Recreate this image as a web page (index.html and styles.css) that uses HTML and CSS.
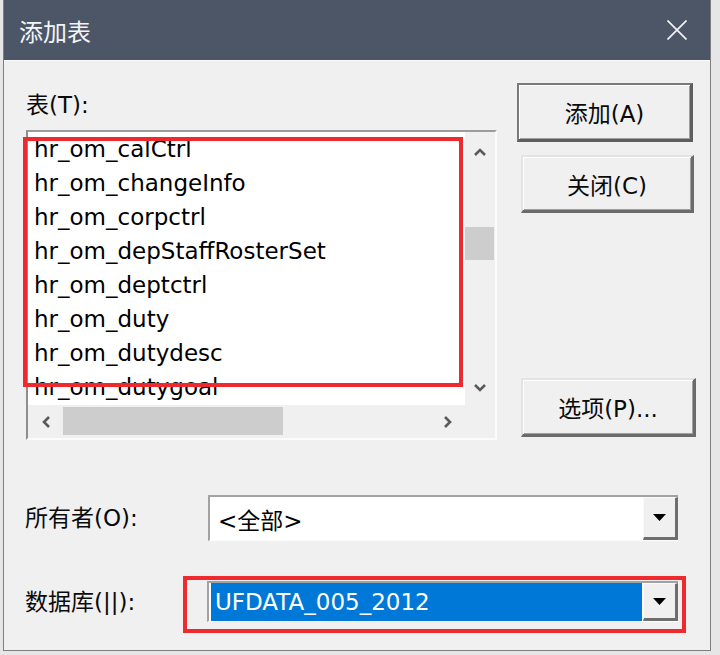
FILE: index.html
```html
<!DOCTYPE html>
<html lang="zh-CN">
<head>
<meta charset="utf-8">
<title>添加表</title>
<link rel="stylesheet" href="styles.css">
</head>
<body>
<div class="dialog">
  <div class="titlebar">
    <span class="title">添加表</span>
    <svg class="close" width="20" height="20" viewBox="0 0 20 20"><path d="M0.5 0.5 L19.5 19.5 M19.5 0.5 L0.5 19.5" stroke="#f2f3f5" stroke-width="1.7" fill="none"/></svg>
  </div>
  <div class="content">
    <div class="main">
      <div class="left">
        <div class="label lbl-table">表(T):</div>
        <div class="listbox">
          <ul class="items">
            <li>hr_om_calCtrl</li>
            <li>hr_om_changeInfo</li>
            <li>hr_om_corpctrl</li>
            <li>hr_om_depStaffRosterSet</li>
            <li>hr_om_deptctrl</li>
            <li>hr_om_duty</li>
            <li>hr_om_dutydesc</li>
            <li>hr_om_dutygoal</li>
          </ul>
          <div class="vscroll">
            <div class="arrow"><svg width="12" height="8" viewBox="0 0 12 8"><polyline points="1,7 6,2 11,7" fill="none" stroke="#5a5a5a" stroke-width="2.6"/></svg></div>
            <div class="vtrack"><div class="vthumb"></div></div>
            <div class="arrow"><svg width="12" height="8" viewBox="0 0 12 8"><polyline points="1,1 6,6 11,1" fill="none" stroke="#5a5a5a" stroke-width="2.6"/></svg></div>
          </div>
          <div class="hscroll">
            <div class="harrow"><svg width="8" height="12" viewBox="0 0 8 12"><polyline points="7,1 2,6 7,11" fill="none" stroke="#5a5a5a" stroke-width="2.6"/></svg></div>
            <div class="htrack"><div class="hthumb"></div></div>
            <div class="harrow"><svg width="8" height="12" viewBox="0 0 8 12"><polyline points="1,1 6,6 1,11" fill="none" stroke="#5a5a5a" stroke-width="2.6"/></svg></div>
          </div>
          <div class="corner"></div>
          <div class="annot annot-list"></div>
        </div>
      </div>
      <div class="buttons">
        <div class="btn btn-default">添加(A)</div>
        <div class="btn btn-close">关闭(C)</div>
        <div class="btn btn-opt">选项(P)...</div>
      </div>
    </div>
    <div class="field-row owner">
      <div class="label">所有者(O):</div>
      <div class="combo combo-owner">
        <div class="field">&lt;全部&gt;</div>
        <div class="dd"><svg width="13" height="7" viewBox="0 0 13 7"><polygon points="0,0 13,0 6.5,7" fill="#000"/></svg></div>
      </div>
    </div>
    <div class="field-row db">
      <div class="label">数据库(||):</div>
      <div class="combo combo-db">
        <div class="field"><span class="sel">UFDATA_005_2012</span></div>
        <div class="dd"><svg width="13" height="7" viewBox="0 0 13 7"><polygon points="0,0 13,0 6.5,7" fill="#000"/></svg></div>
        <div class="annot annot-db"></div>
      </div>
    </div>
  </div>
</div>
</body>
</html>
```

FILE: styles.css
```css
html, body {
  margin: 0;
  padding: 0;
}
body {
  width: 720px;
  height: 655px;
  overflow: hidden;
  background: #e6e6e6;
  font-family: "DejaVu Sans", "Noto Sans CJK SC", sans-serif;
  font-size: 23px;
  color: #0a0a0a;
}
.dialog {
  margin-left: 3px;
  width: 708px;
  height: 651px;
  box-sizing: border-box;
  border: 1px solid #7e7e7e;
  border-top: 0;
  background: #f0f0f0;
  display: flex;
  flex-direction: column;
}
.titlebar {
  height: 60px;
  flex: none;
  background: #4c5666;
  display: flex;
  align-items: center;
  justify-content: space-between;
  padding: 0 23px 0 15px;
}
.title {
  color: #f3f4f6;
  font-size: 24px;
  font-family: "Noto Sans CJK SC", sans-serif;
}
.close {
  display: block;
}
.content {
  flex: 1;
  border-top: 1px solid #fbfbfb;
  padding-left: 22px;
}
.main {
  display: flex;
  gap: 20px;
  align-items: flex-start;
}
.left {
  width: 471px;
  padding-top: 31px;
}
.label {
  line-height: 26px;
  white-space: nowrap;
}
.lbl-table {
  margin-bottom: 12px;
}
.listbox {
  position: relative;
  display: grid;
  grid-template-columns: 437px 30px;
  grid-template-rows: 273px 33px;
  border-top: 2px solid #9c9c9c;
  border-left: 2px solid #8e8e8e;
  border-right: 2px solid #fbfbfb;
  border-bottom: 2px solid #fbfbfb;
}
.items {
  list-style: none;
  margin: 0;
  padding: 0 0 0 6px;
  background: #fff;
  overflow: hidden;
  color: #000;
}
.items li {
  line-height: 34px;
  height: 34px;
  white-space: nowrap;
}
.vscroll {
  background: #f0f0f0;
  display: grid;
  grid-template-rows: 40px 1fr 35px;
}
.arrow, .harrow {
  display: flex;
  align-items: center;
  justify-content: center;
}
.vthumb {
  margin-top: 55px;
  height: 33px;
  width: 29px;
  background: #cdcdcd;
}
.hscroll {
  background: #f0f0f0;
  display: grid;
  grid-template-columns: 35px 1fr 35px;
}
.hthumb {
  margin-top: 2px;
  width: 220px;
  height: 28px;
  background: #cdcdcd;
}
.corner {
  background: #f0f0f0;
}
.annot {
  position: absolute;
  box-sizing: border-box;
  border: 4px solid #ee2a2f;
  pointer-events: none;
}
.annot-list {
  left: -5px;
  top: 5px;
  width: 440px;
  height: 250px;
}
.buttons {
  padding-top: 22px;
  display: flex;
  flex-direction: column;
  align-items: flex-start;
}
.btn {
  box-sizing: border-box;
  display: flex;
  align-items: center;
  justify-content: center;
  background: #f0f0f0;
  color: #0a0a0a;
  white-space: nowrap;
  border-top: 2px solid #e4e4e4;
  border-left: 2px solid #e4e4e4;
  border-right: 3px solid #6b6b6b;
  border-bottom: 3px solid #6b6b6b;
  box-shadow: inset 1px 1px 0 #ffffff, inset -1px -1px 0 #a0a0a0;
}
.btn-default {
  width: 176px;
  height: 59px;
  border-top: 2px solid #7a7a7a;
  border-left: 2px solid #7a7a7a;
  border-right: 3px solid #5e5e5e;
  border-bottom: 3px solid #5e5e5e;
}
.btn-close {
  margin-top: 13px;
  margin-left: 4px;
  width: 173px;
  height: 58px;
}
.btn-opt {
  margin-top: 165px;
  margin-left: 4px;
  width: 175px;
  height: 59px;
}
.field-row {
  display: grid;
  grid-template-columns: 182px 471px;
  align-items: center;
  margin-left: -1px;
}
.owner {
  margin-top: 55px;
}
.db {
  margin-top: 40px;
}
.combo {
  position: relative;
  display: flex;
  box-sizing: border-box;
  border-top: 2px solid #a2a2a2;
  border-left: 2px solid #a2a2a2;
  border-bottom: 1px solid #fdfdfd;
}
.combo-owner {
  height: 46px;
  margin-left: 1px;
}
.combo-db {
  height: 41px;
}
.field {
  flex: 1;
  background: #fff;
  display: flex;
  align-items: center;
  padding-left: 8px;
  color: #000;
}
.combo-db .field {
  padding: 0 1px 0 2px;
  align-items: stretch;
}
.sel {
  flex: 1;
  background: #0078d7;
  color: #fff;
  display: flex;
  align-items: center;
  padding-left: 4px;
}
.dd {
  width: 35px;
  box-sizing: border-box;
  background: #f0f0f0;
  display: flex;
  align-items: center;
  justify-content: center;
  border-top: 1px solid #fafafa;
  border-left: 1px solid #fafafa;
  border-right: 3px solid #6e6e6e;
  border-bottom: 3px solid #6e6e6e;
}
.annot-db {
  left: -26px;
  top: -7px;
  width: 503px;
  height: 57px;
}
```
